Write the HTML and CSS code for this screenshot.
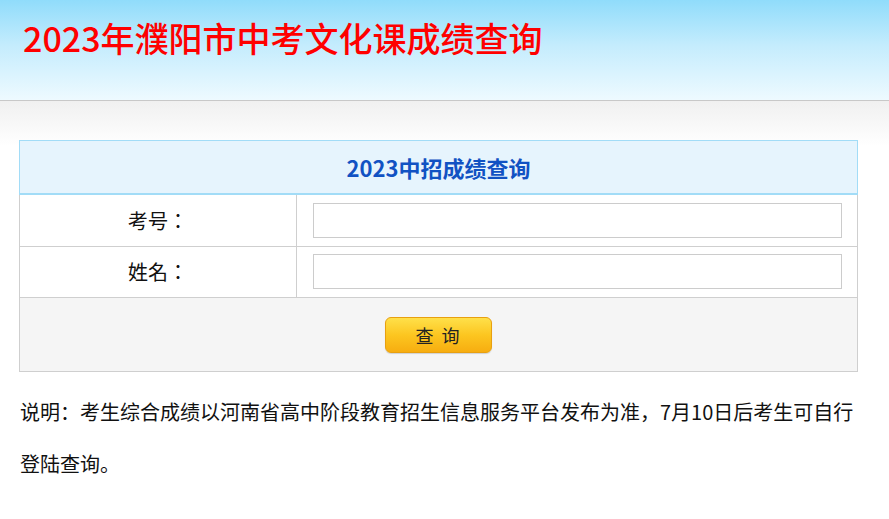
FILE: index.html
```html
<!DOCTYPE html>
<html lang="zh-CN">
<head>
<meta charset="utf-8">
<title>2023年濮阳市中考文化课成绩查询</title>
<link rel="stylesheet" href="styles.css">
</head>
<body>
<header class="top">
  <h1 class="site-title">2023年濮阳市中考文化课成绩查询</h1>
</header>
<main class="main">
  <section class="panel">
    <h2 class="panel-title">2023中招成绩查询</h2>
    <table class="form-table">
      <tr>
        <td class="label">考号：</td>
        <td class="field"><input class="text-input" type="text"></td>
      </tr>
      <tr>
        <td class="label">姓名：</td>
        <td class="field"><input class="text-input" type="text"></td>
      </tr>
      <tr>
        <td class="actions" colspan="2"><button class="query-btn" type="button">查 询</button></td>
      </tr>
    </table>
  </section>
  <p class="note">说明：考生综合成绩以河南省高中阶段教育招生信息服务平台发布为准，7月10日后考生可自行登陆查询。</p>
</main>
</body>
</html>
```

FILE: styles.css
```css
* { box-sizing: border-box; }
html, body {
  margin: 0;
  padding: 0;
  background: #fff;
  font-family: "Microsoft YaHei", "Noto Sans CJK SC", "Noto Sans", sans-serif;
  color: #111;
}
.top {
  height: 101px;
  background: linear-gradient(to bottom, #90dcfb 0%, #c4ecfd 45%, #eefaff 100%);
  border-bottom: 1px solid #c8c8c8;
  padding: 16px 0 0 23px;
}
.site-title {
  margin: 0;
  font-size: 34px;
  line-height: 44px;
  font-weight: 500;
  color: #ff0000;
}
.main {
  background: linear-gradient(to bottom, #f0f0f0 0px, #ffffff 45px);
  padding: 39px 32px 40px 19px;
}
.panel {
  width: 839px;
}
.panel-title {
  margin: 0;
  height: 55px;
  border: 1px solid #a2dcf7;
  border-bottom-width: 2px;
  background: #e6f4fd;
  color: #1152c3;
  font-size: 22px;
  font-weight: bold;
  text-align: center;
  line-height: 52px;
}
.form-table {
  width: 839px;
  border-collapse: collapse;
  table-layout: fixed;
}
.form-table td {
  border: 1px solid #cfcfcf;
  padding: 0;
}
.form-table tr:first-child td { border-top: none; }
.label {
  width: 277px;
  height: 51px;
  text-align: center;
  font-family: "Noto Sans CJK JP", "Noto Sans CJK SC", sans-serif;
  font-feature-settings: "locl" 0;
  font-size: 20px;
  color: #111;
}
.field {
  padding: 0 15px 0 16px !important;
}
.text-input {
  display: block;
  width: 100%;
  height: 35px;
  border: 1px solid #cccccc;
  background: #fff;
  outline: none;
}
.actions {
  height: 74px;
  background: #f5f5f5;
  text-align: center;
}
.query-btn {
  width: 107px;
  height: 36px;
  margin-top: 1px;
  border: 1px solid #e8a010;
  border-radius: 6px;
  background: linear-gradient(to bottom, #ffe04a 0%, #fcc620 50%, #f7ad10 100%);
  box-shadow: 0 1px 1px rgba(0,0,0,0.15);
  font-family: "Microsoft YaHei", "Noto Sans CJK SC", sans-serif;
  font-size: 18px;
  color: #222;
  letter-spacing: 2px;
  padding: 0;
}
.note {
  margin: 14px 0 0 1px;
  width: 838px;
  font-size: 20px;
  line-height: 52px;
  color: #111;
}
```
